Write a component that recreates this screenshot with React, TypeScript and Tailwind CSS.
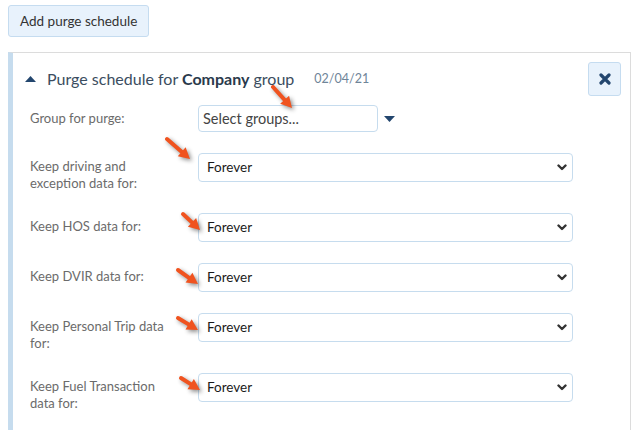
const font = { fontFamily: 'Lato, "Open Sans", sans-serif' };

const rows = [
  { label: ["Keep driving and", "exception data for:"] },
  { label: ["Keep HOS data for:"] },
  { label: ["Keep DVIR data for:"] },
  { label: ["Keep Personal Trip data", "for:"] },
  { label: ["Keep Fuel Transaction", "data for:"] },
];

const arrows: [number, number, number, number][] = [
  [273, 87, 292, 108],
  [167, 139, 190, 159],
  [183, 214, 200, 230],
  [178, 270, 198, 284],
  [178, 318, 198, 330],
  [181, 378, 200, 390],
];

function Arrow({ x1, y1, x2, y2 }: { x1: number; y1: number; x2: number; y2: number }) {
  const dx = x2 - x1;
  const dy = y2 - y1;
  const len = Math.hypot(dx, dy);
  const ux = dx / len;
  const uy = dy / len;
  const head = 11;
  const bx = x2 - ux * head;
  const by = y2 - uy * head;
  const px = -uy * 6;
  const py = ux * 6;
  return (
    <g>
      <line x1={x1} y1={y1} x2={bx + ux} y2={by + uy} stroke="#f0531f" strokeWidth={4} strokeLinecap="round" />
      <polygon points={`${x2},${y2} ${bx + px},${by + py} ${bx - px},${by - py}`} fill="#f0531f" />
    </g>
  );
}

function SelectBox() {
  return (
    <div className="flex h-[29px] w-[375px] items-center justify-between rounded-[4px] border border-[#c6dcee] bg-white pl-[8px] pr-[5px] text-[13.5px] text-[#1a1a1a]">
      <span>Forever</span>
      <svg width="10" height="7" viewBox="0 0 10 7">
        <polyline points="1.5,1.5 5,5 8.5,1.5" fill="none" stroke="#333" strokeWidth="2.4" strokeLinecap="round" strokeLinejoin="round" />
      </svg>
    </div>
  );
}

export default function App() {
  return (
    <div className="relative h-[430px] w-[633px] overflow-hidden bg-white" style={font}>
      <div className="px-[8px] pt-[5px]">
        <button className="h-[32px] rounded-[3px] border border-[#c5dcf0] bg-[#e8f2fc] px-[11px] text-[13.5px] text-[#333]">
          Add purge schedule
        </button>

        <div className="mt-[15px] h-[400px] w-[623px] border-t border-r border-[#dcdcdc] border-l-[5px] border-l-[#c6dcee] pl-[12px] pr-[9px] pt-[9px]">
          <div className="flex h-[34px] items-center justify-between">
            <div className="flex items-center">
              <svg width="11" height="6" viewBox="0 0 11 6" className="mr-[11px]">
                <polygon points="5.5,0 11,6 0,6" fill="#23466e" />
              </svg>
              <span className="text-[16px] text-[#3b4d60]">
                Purge schedule for <b className="font-bold text-[#2a3a4c]">Company</b> group
              </span>
              <span className="ml-[20px] text-[12.5px] text-[#6f8599]">02/04/21</span>
            </div>
            <button className="flex h-[34px] w-[33px] items-center justify-center rounded-[3px] border border-[#c5dcf0] bg-[#e8f2fc]">
              <svg width="12" height="12" viewBox="0 0 12 12">
                <path d="M2 2 L10 10 M10 2 L2 10" stroke="#23466e" strokeWidth="3.2" strokeLinecap="round" />
              </svg>
            </button>
          </div>

          <div className="mt-[9px] flex flex-col gap-[21px] pl-[5px] text-[13px] leading-[17px] text-[#6b6b6b]">
            <div className="flex items-start">
              <div className="w-[168px] pt-[5px]">Group for purge:</div>
              <div className="flex h-[27px] w-[180px] items-center rounded-[4px] border border-[#c6dcee] bg-white px-[4px] text-[14.5px] text-[#444]">
                Select groups...
              </div>
              <svg width="11" height="6" viewBox="0 0 11 6" className="ml-[6px] mt-[11px]">
                <polygon points="0,0 11,0 5.5,6" fill="#23466e" />
              </svg>
            </div>
            {rows.map((r, i) => (
              <div key={i} className="flex items-start">
                <div className="w-[168px] pt-[5px]">
                  {r.label.map((l, j) => (
                    <div key={j}>{l}</div>
                  ))}
                </div>
                <SelectBox />
              </div>
            ))}
          </div>
        </div>
      </div>

      <svg className="pointer-events-none absolute left-0 top-0" width="633" height="430" style={{ filter: "drop-shadow(2px 2px 2px rgba(0,0,0,0.45))" }}>
        {arrows.map(([a, b, c, d], i) => (
          <Arrow key={i} x1={a} y1={b} x2={c} y2={d} />
        ))}
      </svg>
    </div>
  );
}
